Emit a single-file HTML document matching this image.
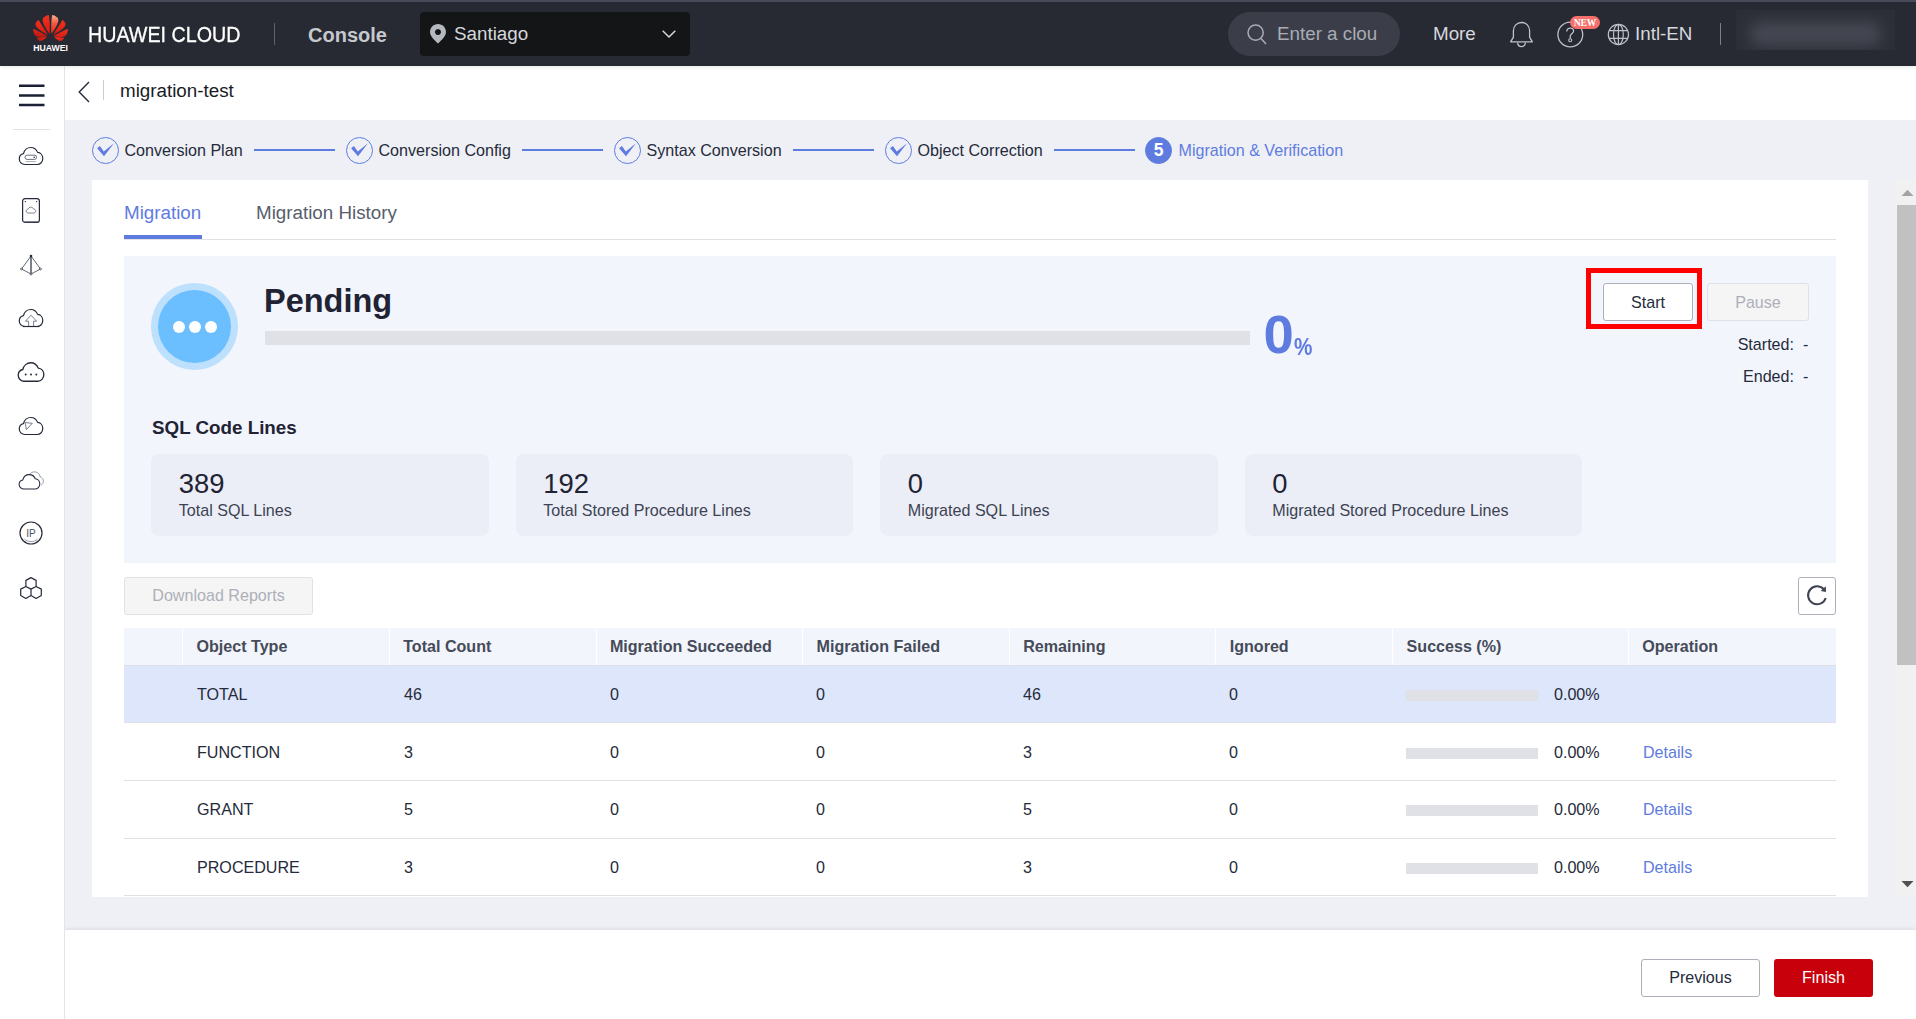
<!DOCTYPE html>
<html lang="en">
<head>
<meta charset="utf-8">
<title>migration-test</title>
<style>
*{box-sizing:border-box;margin:0;padding:0}
html,body{width:1916px;height:1019px;overflow:hidden;background:#eff0f5;font-family:"Liberation Sans",sans-serif;color:#252b3a}
div,span{white-space:nowrap}
#top{position:absolute;left:0;top:0;width:1916px;height:65.7px;background:#272a33;box-shadow:0 1px 4px rgba(0,0,0,.10);z-index:5}
#top .strip{position:absolute;left:0;top:0;width:1916px;height:2px;background:#464a59}
#top .brand{position:absolute;left:88px;top:21.5px;font-size:22.6px;line-height:26px;color:#fff;transform:scaleX(.872);transform-origin:0 50%;-webkit-text-stroke:.3px #fff}
#top .hw{position:absolute;left:30px;top:43px;width:41px;text-align:center;font-size:8.7px;line-height:10px;font-weight:bold;color:#fff}
#top .div1{position:absolute;left:274px;top:23px;width:1px;height:22px;background:#5d616e}
#top .console{position:absolute;left:308px;top:22px;font-size:20px;line-height:26px;font-weight:bold;color:#c6c8ce}
#top .region{position:absolute;left:420px;top:12px;width:270px;height:44px;border-radius:4px;background:#141517}
#top .region span{position:absolute;left:34px;top:9px;font-size:18.8px;line-height:26px;color:#d6d8dd}
#top .search{position:absolute;left:1228px;top:12px;width:172px;height:44px;border-radius:22px;background:#3b3e48}
#top .search span{position:absolute;left:49px;top:9px;font-size:18.8px;line-height:26px;color:#a9acb5}
#top .more{position:absolute;left:1433px;top:21px;font-size:18.8px;line-height:26px;color:#d6d8dd}
#top .lang{position:absolute;left:1635px;top:21px;font-size:18.8px;line-height:26px;color:#d6d8dd}
#top .div2{position:absolute;left:1720px;top:23px;width:1px;height:22px;background:#7d808a}
#top .user{position:absolute;left:1736px;top:10px;width:159px;height:40px;background:#2c2f38;overflow:hidden}
#top .user i{position:absolute;left:14px;top:12px;width:131px;height:24px;border-radius:10px;background:#454852;filter:blur(7px)}
#top .new{position:absolute;left:1570px;top:16px;width:30px;height:13px;border-radius:7px;background:#f66f6a;color:#fff;font-family:"Liberation Serif",serif;font-size:9.6px;line-height:13px;text-align:center;font-weight:bold;letter-spacing:-0.2px}
#top svg{position:absolute;overflow:visible}
#side{position:absolute;left:0;top:66px;width:65px;height:953px;background:#fff;border-right:1px solid #e3e4e9;z-index:2}
#side .sep{position:absolute;left:13px;top:63px;width:37px;height:1px;background:#dfe1e6}
#side svg{position:absolute;overflow:visible}
#title{position:absolute;left:65px;top:66px;width:1851px;height:54px;background:#fff}
#title .vbar{position:absolute;left:38px;top:14px;width:1px;height:20px;background:#c9ccd3}
#title .name{position:absolute;left:55px;top:12px;font-size:18.8px;line-height:26px;color:#191c24}
#title svg{position:absolute}
.step-t{position:absolute;top:139px;font-size:16.1px;line-height:22px;color:#252b3a}
.step-l{position:absolute;top:149px;height:2px;width:81px;background:#5e7ce0}
.step-c{position:absolute;top:136.5px;width:27px;height:27px;border:1px solid #5e7ce0;border-radius:50%}
.step-c svg{position:absolute;left:0;top:0}
.step-c.on{background:#5e7ce0;color:#fff;font-size:17.5px;line-height:25px;text-align:center;font-weight:bold}
#card{position:absolute;left:92px;top:180px;width:1776px;height:717px;background:#fff;overflow:hidden}
#card .tab{position:absolute;top:20px;font-size:18.8px;line-height:26px}
#card .tabline{position:absolute;left:32px;top:59px;width:1712px;height:1px;background:#dfe1e6}
#card .tabon{position:absolute;left:32px;top:55px;width:78px;height:4px;background:#5e7ce0}
#panel{position:absolute;left:32px;top:76px;width:1712px;height:307px;background:#f2f5fc}
#panel .c1{position:absolute;left:27px;top:27px;width:87px;height:87px;border-radius:50%;background:#bde0fd}
#panel .c2{position:absolute;left:34px;top:34px;width:73px;height:73px;border-radius:50%;background:#6cbfff}
#panel .dot{position:absolute;top:64.5px;width:12px;height:12px;border-radius:50%;background:#fff}
#panel .pending{position:absolute;left:140px;top:25px;font-size:32.5px;line-height:40px;font-weight:bold;color:#1f2333}
#panel .bar{position:absolute;left:141px;top:75px;width:985px;height:14px;background:#dfe1e6}
#panel .zero{position:absolute;left:1139.5px;top:47px;font-size:54.5px;line-height:64px;font-weight:bold;color:#5e7ce0}
#panel .pct{position:absolute;left:1169.6px;top:77px;font-size:23px;line-height:28px;font-weight:bold;color:#5e7ce0;transform:scaleX(.9);transform-origin:0 50%}
#panel .redbox{position:absolute;left:1462px;top:12px;width:116px;height:61px;border:5px solid #fe0000}
#panel .btn{position:absolute;top:27px;height:38px;border-radius:3px;font-size:16.1px;line-height:36px;text-align:center}
#panel .start{left:1479px;width:90px;border:1px solid #adb0b8;background:#fff;color:#252b3a}
#panel .pause{left:1583px;width:102px;border:1px solid #dfe1e6;background:#f5f5f6;color:#adb0b8}
#panel .lbl{position:absolute;right:42px;font-size:16.1px;line-height:22px;color:#252b3a;text-align:right}
#panel .val{position:absolute;left:1679px;font-size:16.1px;line-height:22px;color:#252b3a}
#panel .h{position:absolute;left:28px;top:159px;font-size:18.8px;line-height:26px;font-weight:bold;color:#1f2333}
.stat{position:absolute;top:198px;width:337.6px;height:82px;border-radius:8px;background:#ebeef6}
.stat b{position:absolute;left:27.5px;top:14px;font-size:27.4px;line-height:32px;font-weight:normal;color:#1f2333}
.stat i{position:absolute;left:27.5px;top:45px;font-size:16.1px;line-height:22px;font-style:normal;color:#3d4353}
#dl{position:absolute;left:32px;top:397px;width:189px;height:38px;border:1px solid #dfe1e6;border-radius:3px;background:#f5f5f6;color:#adb0b8;font-size:16.1px;line-height:34px;text-align:center}
#rf{position:absolute;left:1706px;top:397px;width:38px;height:38px;border:1px solid #adb0b8;border-radius:3px;background:#fff}
#rf svg{position:absolute;left:-1px;top:-1px}
#th{position:absolute;left:32px;top:448px;width:1712px;height:37px;background:#f2f5fc}
#th div{position:absolute;top:0;height:37px;font-size:16.1px;line-height:37px;font-weight:bold;color:#464b59;border-left:1.5px solid #fff;padding-left:13.4px}
.tr{position:absolute;left:32px;width:1712px;height:57px}
.tr.total{background:#dee6fb;height:57px}
.hr{position:absolute;left:32px;width:1712px;height:1px;background:#dfe1e6}
.tr span{position:absolute;top:18px;font-size:16.1px;line-height:22px;color:#252b3a}
.tr em{position:absolute;left:1282px;top:25px;width:132px;height:11px;background:#dfe1e6}
.tr a{position:absolute;left:1519px;top:18px;font-size:16.1px;line-height:22px;color:#5e7ce0;text-decoration:none}
#sb{position:absolute;left:1895px;top:180px;width:21px;height:717px;background:#f1f1f1}
#sb .thumb{position:absolute;left:2px;top:25px;width:19px;height:459.5px;background:#c1c1c1}
#sb svg{position:absolute;left:0}
#foot{position:absolute;left:65px;top:930px;width:1851px;height:89px;background:#fff;box-shadow:0 -1px 4px rgba(0,0,0,.09)}
#foot .prev{position:absolute;left:1576px;top:29px;width:119px;height:38px;border:1px solid #adb0b8;border-radius:3px;background:#fff;font-size:16.1px;line-height:34px;text-align:center;color:#252b3a}
#foot .fin{position:absolute;left:1709px;top:29px;width:99px;height:38px;border-radius:3px;background:#c7000b;font-size:16.1px;line-height:36px;text-align:center;color:#fff}
</style>
</head>
<body>
<div id="top">
<div class="strip"></div>
<svg style="left:32px;top:14px" width="37" height="28" viewBox="32 14 37 28">
<defs>
<linearGradient id="g1" x1="0" y1="0" x2="0" y2="1"><stop offset="0" stop-color="#f0331f"/><stop offset="1" stop-color="#d81a12"/></linearGradient>
<linearGradient id="g2" x1="0" y1="0" x2="0" y2="1"><stop offset="0" stop-color="#f9b08e"/><stop offset=".45" stop-color="#f2583c"/><stop offset="1" stop-color="#e6261a"/></linearGradient>
<linearGradient id="g3" x1="0" y1="0" x2="0" y2="1"><stop offset="0" stop-color="#e8271a"/><stop offset="1" stop-color="#b81710"/></linearGradient>
</defs>
<g id="lp">
<path d="M49.7,34 C45.5,28.5 40.5,20.5 43.6,17.6 C45.6,15.7 47.8,15 48.9,15 C49.8,20 50,28 49.7,34Z" fill="url(#g1)"/>
<path d="M47.9,34.7 C42,32 33.6,27 35.8,22.8 C36.8,21 38,20.2 38.7,19.9 C41,24 45,30 47.9,34.7Z" fill="url(#g1)"/>
<path d="M47.2,35.7 C43,37.6 38,37.6 36,36 C33.8,34.2 32.9,31 33.2,28.8 C37,30.5 43,33.5 47.2,35.7Z" fill="url(#g3)"/>
<path d="M36.8,37.7 C40,37.8 44,37.2 47.1,36.6 C45,39.2 42,41.3 40.2,41.1 C38.9,40.9 37.6,39.5 36.8,37.7Z" fill="url(#g3)"/>
</g>
<g transform="translate(101,0) scale(-1,1)">
<path d="M49.7,34 C45.5,28.5 40.5,20.5 43.6,17.6 C45.6,15.7 47.8,15 48.9,15 C49.8,20 50,28 49.7,34Z" fill="url(#g2)"/>
<path d="M47.9,34.7 C42,32 33.6,27 35.8,22.8 C36.8,21 38,20.2 38.7,19.9 C41,24 45,30 47.9,34.7Z" fill="url(#g1)"/>
<path d="M47.2,35.7 C43,37.6 38,37.6 36,36 C33.8,34.2 32.9,31 33.2,28.8 C37,30.5 43,33.5 47.2,35.7Z" fill="url(#g1)"/>
<path d="M36.8,37.7 C40,37.8 44,37.2 47.1,36.6 C45,39.2 42,41.3 40.2,41.1 C38.9,40.9 37.6,39.5 36.8,37.7Z" fill="url(#g1)"/>
</g>
</svg>
<div class="hw">HUAWEI</div>
<div class="brand">HUAWEI CLOUD</div>
<div class="div1"></div>
<div class="console">Console</div>
<div class="region"><span>Santiago</span></div>
<div class="search"><span>Enter a clou</span></div>
<div class="more">More</div>

<svg style="left:430.4px;top:24px" width="16" height="19.5" viewBox="0 0 17 20" preserveAspectRatio="none"><path d="M8.5,0 C3.8,0 0,3.7 0,8.2 C0,12.6 4.6,16.4 8.5,20 C12.4,16.4 17,12.6 17,8.2 C17,3.7 13.2,0 8.5,0Z M8.5,5 A3.2,3.2 0 1 1 8.49,5Z" fill="#b6b8bf" fill-rule="evenodd"/></svg>
<svg style="left:662px;top:30px" width="14" height="8" viewBox="0 0 14 8"><path d="M.7,.7 L7,7 L13.3,.7" fill="none" stroke="#d6d8dd" stroke-width="1.5"/></svg>
<svg style="left:1247px;top:24px" width="20" height="21" viewBox="0 0 20 21"><circle cx="8.6" cy="8.6" r="7.6" fill="none" stroke="#a9acb5" stroke-width="1.5"/><path d="M14,14.4 L19,20" stroke="#a9acb5" stroke-width="1.5" fill="none"/></svg>
<svg style="left:1510px;top:21px" width="23" height="27" viewBox="0 0 23 27"><path d="M.6,20.8 H22.4 L19.6,16.2 V9.8 C19.6,5 16.2,1.5 11.5,1.5 C6.8,1.5 3.4,5 3.4,9.8 V16.2 Z" fill="none" stroke="#bfc1c8" stroke-width="1.3" stroke-linejoin="round"/><path d="M7.6,21.6 C7.8,24 9.4,25.6 11.5,25.6 C13.6,25.6 15.2,24 15.4,21.6" fill="none" stroke="#bfc1c8" stroke-width="1.3"/></svg>
<svg style="left:1557px;top:21px" width="27" height="27" viewBox="0 0 27 27"><circle cx="13.3" cy="13.5" r="12.4" fill="none" stroke="#bfc1c8" stroke-width="1.3"/><path d="M9.8,10.6 C9.8,8.4 11.3,7.2 13.2,7.2 C15.2,7.2 16.6,8.4 16.6,10.1 C16.6,12.6 13.2,12.7 13.2,15.6 V17.4" fill="none" stroke="#bfc1c8" stroke-width="1.3"/><circle cx="13.2" cy="19.3" r="1.5" fill="none" stroke="#bfc1c8" stroke-width="1.1"/></svg>
<svg style="left:1607px;top:23px" width="23" height="23" viewBox="0 0 23 23"><g fill="none" stroke="#bfc1c8" stroke-width="1.2"><circle cx="11.4" cy="11.5" r="10.1"/><ellipse cx="11.4" cy="11.5" rx="4.9" ry="10.1"/><path d="M11.4,1.4V21.6M2,7.6H20.8M2,15.4H20.8"/></g></svg>

<div class="new">NEW</div>
<div class="lang">Intl-EN</div>
<div class="div2"></div>
<div class="user"><i></i></div>
</div>
<div id="side"><div class="sep"></div>
<svg style="left:19px;top:18px" width="26" height="24" viewBox="0 0 26 24"><path d="M0,1.8H25.5M0,11.5H25.5M0,21H25.5" stroke="#1a2035" stroke-width="2.6" fill="none"/></svg>
<svg style="left:18px;top:81px" width="26" height="18" viewBox="0 0 26 18"><path d="M6.91,17.5 C3.62,17.5 1.27,15 1.27,12 C1.27,9.3 3.06,7.2 5.5,6.7 C6.25,3.2 9.17,0.5 12.74,0.5 C15.84,0.5 18.47,2.5 19.6,5.4 C22.61,5.6 24.77,8.2 24.77,11.4 C24.77,14.8 22.23,17.5 19.13,17.5 Z" fill="none" stroke="#252b3a" stroke-width="1.2" stroke-linejoin="round" stroke-linecap="round"/><rect x="7" y="8.2" width="11.6" height="4.2" rx="2.1" fill="none" stroke="#5a6072" stroke-width=".9"/><circle cx="16.2" cy="10.3" r=".8" fill="#252b3a"/><path d="M7.6,14.6H18" stroke="#a9adb8" stroke-width="1" fill="none"/></svg>
<svg style="left:22px;top:132px" width="18" height="25" viewBox="0 0 18 25"><rect x=".6" y=".6" width="16.8" height="23.8" rx="2.5" fill="none" stroke="#252b3a" stroke-width="1.2" stroke-linejoin="round" stroke-linecap="round"/><path d="M6.2,15 C5,15 4.2,14.2 4.2,13.1 C4.2,12.1 5,11.3 6,11.2 C6.4,10 7.5,9.2 8.8,9.2 C10.1,9.2 11.2,10 11.6,11.1 C12.8,11.1 13.8,12 13.8,13.1 C13.8,14.2 12.9,15 11.8,15 Z" fill="none" stroke="#5a6072" stroke-width=".8"/><circle cx="3.4" cy="3.6" r=".7" fill="#252b3a"/><circle cx="14.6" cy="3.6" r=".7" fill="#252b3a"/><path d="M2,23.6H16" stroke="#7d8190" stroke-width="1.2"/></svg>
<svg style="left:20px;top:187.5px" width="22" height="22" viewBox="0 0 22 22"><path d="M11,2 L1.5,15 L11,20 L20.5,15 Z" fill="none" stroke="#3a4052" stroke-width=".8" stroke-linejoin="round"/><path d="M11,2 V20" stroke="#252b3a" stroke-width="1.2"/><circle cx="11" cy="2" r="1.3" fill="#252b3a"/><circle cx="1.6" cy="15" r="1" fill="#fff" stroke="#252b3a" stroke-width=".7"/><circle cx="20.4" cy="15" r="1" fill="#fff" stroke="#252b3a" stroke-width=".7"/><circle cx="11" cy="20" r="1" fill="#fff" stroke="#252b3a" stroke-width=".7"/></svg>
<svg style="left:18px;top:243px" width="26" height="18" viewBox="0 0 26 18"><path d="M6.91,17.5 C3.62,17.5 1.27,15 1.27,12 C1.27,9.3 3.06,7.2 5.5,6.7 C6.25,3.2 9.17,0.5 12.74,0.5 C15.84,0.5 18.47,2.5 19.6,5.4 C22.61,5.6 24.77,8.2 24.77,11.4 C24.77,14.8 22.23,17.5 19.13,17.5 Z" fill="none" stroke="#252b3a" stroke-width="1.2" stroke-linejoin="round" stroke-linecap="round"/><path d="M13,6.2 L7.4,12.2 H10.6 V17.5 H15.6 V12.2 H18.6 Z" fill="#fff" stroke="#5a6072" stroke-width=".8" stroke-linejoin="round"/><path d="M5,17.5H21" stroke="#252b3a" stroke-width="1.2"/></svg>
<svg style="left:18px;top:297px" width="26" height="18" viewBox="0 0 26 18"><g transform="translate(13,9) scale(1.09) translate(-13,-9)"><path d="M6.91,17.5 C3.62,17.5 1.27,15 1.27,12 C1.27,9.3 3.06,7.2 5.5,6.7 C6.25,3.2 9.17,0.5 12.74,0.5 C15.84,0.5 18.47,2.5 19.6,5.4 C22.61,5.6 24.77,8.2 24.77,11.4 C24.77,14.8 22.23,17.5 19.13,17.5 Z" fill="none" stroke="#252b3a" stroke-width="1.2" stroke-linejoin="round" stroke-linecap="round" stroke-width="1.1"/><circle cx="8.1" cy="11.3" r=".9" fill="#252b3a"/><circle cx="13" cy="11.3" r=".9" fill="#252b3a"/><circle cx="17.9" cy="11.3" r=".9" fill="#252b3a"/></g></svg>
<svg style="left:18px;top:351px" width="26" height="18" viewBox="0 0 26 18"><path d="M6.91,17.5 C3.62,17.5 1.27,15 1.27,12 C1.27,9.3 3.06,7.2 5.5,6.7 C6.25,3.2 9.17,0.5 12.74,0.5 C15.84,0.5 18.47,2.5 19.6,5.4 C22.61,5.6 24.77,8.2 24.77,11.4 C24.77,14.8 22.23,17.5 19.13,17.5 Z" fill="none" stroke="#252b3a" stroke-width="1.2" stroke-linejoin="round" stroke-linecap="round"/><path d="M7.1,5.5 L14.3,6.3 L8.4,12.6 Z" fill="#fff" stroke="#5a6072" stroke-width=".8" stroke-linejoin="round"/></svg>
<svg style="left:18px;top:405px" width="27" height="20" viewBox="0 0 27 20"><path d="M11.2,3.6 C12.7,1.7 15,.6 17.2,.9 C20.2,1.3 21.8,3.5 22,5.7 C24.2,6.3 25.5,8.3 25.4,10.5 C25.3,12.1 24.5,13.3 23.2,14" fill="none" stroke="#8c91a0" stroke-width=".9"/><g transform="translate(0,3.2) scale(.88,.85)"><path d="M6.91,17.5 C3.62,17.5 1.27,15 1.27,12 C1.27,9.3 3.06,7.2 5.5,6.7 C6.25,3.2 9.17,0.5 12.74,0.5 C15.84,0.5 18.47,2.5 19.6,5.4 C22.61,5.6 24.77,8.2 24.77,11.4 C24.77,14.8 22.23,17.5 19.13,17.5 Z" fill="none" stroke="#252b3a" stroke-width="1.2" stroke-linejoin="round" stroke-linecap="round" stroke-width="1.5"/></g></svg>
<svg style="left:19px;top:455.3px" width="24" height="24" viewBox="0 0 24 24"><circle cx="12" cy="12" r="11" fill="none" stroke="#252b3a" stroke-width="1.2" stroke-linejoin="round" stroke-linecap="round" stroke-width=".9"/><path d="M5.5,18 C9,21.5 15,21.5 18.5,18" fill="none" stroke="#8c91a0" stroke-width=".9"/><text x="12" y="15.6" text-anchor="middle" font-family="Liberation Sans,sans-serif" font-size="10" fill="#4a5062">IP</text></svg>
<svg style="left:20px;top:511px" width="22" height="22" viewBox="0 0 22 22"><path d="M11,.65 L16.1,3.4 V9.5 L21.3,12.1 V18.5 L16.1,21.4 L11,18.5 L5.9,21.4 L.7,18.5 V12.1 L5.9,9.5 V3.4 Z M5.9,9.5 L11,12.1 L16.1,9.5 M11,12.1 V18.5" fill="none" stroke="#252b3a" stroke-width="1.2" stroke-linejoin="round" stroke-linecap="round" stroke-width="1"/></svg>
</div>
<div id="title">
<svg style="left:13px;top:14.5px" width="12" height="22" viewBox="0 0 12 22"><path d="M11,1 L1.2,11 L11,21" fill="none" stroke="#252b3a" stroke-width="1.4"/></svg>
<div class="vbar"></div><div class="name">migration-test</div></div>
<div class="step-c" style="left:92px"><svg width="25" height="25" viewBox="0 0 25 25"><path d="M4.1,10.2 L6.9,8 L10.8,13.6 L21,5.3 L11,18.3 Z" fill="#5e7ce0"/></svg></div><div class="step-t" style="left:124.5px">Conversion Plan</div><div class="step-l" style="left:254px"></div>
<div class="step-c" style="left:346px"><svg width="25" height="25" viewBox="0 0 25 25"><path d="M4.1,10.2 L6.9,8 L10.8,13.6 L21,5.3 L11,18.3 Z" fill="#5e7ce0"/></svg></div><div class="step-t" style="left:378.5px">Conversion Config</div><div class="step-l" style="left:522px"></div>
<div class="step-c" style="left:614px"><svg width="25" height="25" viewBox="0 0 25 25"><path d="M4.1,10.2 L6.9,8 L10.8,13.6 L21,5.3 L11,18.3 Z" fill="#5e7ce0"/></svg></div><div class="step-t" style="left:646.5px">Syntax Conversion</div><div class="step-l" style="left:793px"></div>
<div class="step-c" style="left:885px"><svg width="25" height="25" viewBox="0 0 25 25"><path d="M4.1,10.2 L6.9,8 L10.8,13.6 L21,5.3 L11,18.3 Z" fill="#5e7ce0"/></svg></div><div class="step-t" style="left:917.5px">Object Correction</div><div class="step-l" style="left:1054px"></div>
<div class="step-c on" style="left:1145px">5</div><div class="step-t" style="left:1178.5px;color:#5e7ce0">Migration &amp; Verification</div>

<div id="card">
<div class="tab" style="left:32px;color:#5e7ce0">Migration</div>
<div class="tab" style="left:164px;color:#575d6c">Migration History</div>
<div class="tabline"></div><div class="tabon"></div>
<div id="panel">
<div class="c1"></div><div class="c2"></div>
<div class="dot" style="left:48.5px"></div><div class="dot" style="left:64.5px"></div><div class="dot" style="left:80.5px"></div>
<div class="pending">Pending</div>
<div class="bar"></div>
<div class="zero">0</div><div class="pct">%</div>
<div class="redbox"></div>
<div class="btn start">Start</div><div class="btn pause">Pause</div>
<div class="lbl" style="top:77px">Started:</div><div class="val" style="top:77px">-</div>
<div class="lbl" style="top:109px">Ended:</div><div class="val" style="top:109px">-</div>
<div class="h">SQL Code Lines</div>
<div class="stat" style="left:27.3px"><b>389</b><i>Total SQL Lines</i></div><div class="stat" style="left:391.8px"><b>192</b><i>Total Stored Procedure Lines</i></div><div class="stat" style="left:756.3px"><b>0</b><i>Migrated SQL Lines</i></div><div class="stat" style="left:1120.8px"><b>0</b><i>Migrated Stored Procedure Lines</i></div>
</div>
<div id="dl">Download Reports</div>
<div id="rf"><svg width="38" height="38" viewBox="0 0 38 38"><path d="M27.7,20.93 A9,9 0 1 1 26.47,13.14" fill="none" stroke="#3d4353" stroke-width="2"/><path d="M27.8,9.2 L28,14.9 L22.7,14.1 Z" fill="#3d4353"/></svg></div>
<div id="th"><div style="left:58.1px">Object Type</div><div style="left:264.8px">Total Count</div><div style="left:471.5px">Migration Succeeded</div><div style="left:678.2px">Migration Failed</div><div style="left:884.8px">Remaining</div><div style="left:1091.3px">Ignored</div><div style="left:1268.2px">Success (%)</div><div style="left:1503.8px">Operation</div></div>
<div class="tr total" style="top:485px"><span style="left:73px">TOTAL</span><span style="left:280px">46</span><span style="left:486px">0</span><span style="left:692px">0</span><span style="left:899px">46</span><span style="left:1105px">0</span><em></em><span style="left:1430px">0.00%</span></div>
<div class="tr" style="top:543px"><span style="left:73px">FUNCTION</span><span style="left:280px">3</span><span style="left:486px">0</span><span style="left:692px">0</span><span style="left:899px">3</span><span style="left:1105px">0</span><em></em><span style="left:1430px">0.00%</span><a>Details</a></div>
<div class="tr" style="top:600px"><span style="left:73px">GRANT</span><span style="left:280px">5</span><span style="left:486px">0</span><span style="left:692px">0</span><span style="left:899px">5</span><span style="left:1105px">0</span><em></em><span style="left:1430px">0.00%</span><a>Details</a></div>
<div class="tr" style="top:658px"><span style="left:73px">PROCEDURE</span><span style="left:280px">3</span><span style="left:486px">0</span><span style="left:692px">0</span><span style="left:899px">3</span><span style="left:1105px">0</span><em></em><span style="left:1430px">0.00%</span><a>Details</a></div>
<div class="hr" style="top:485px"></div><div class="hr" style="top:542px"></div><div class="hr" style="top:600px"></div><div class="hr" style="top:658px"></div><div class="hr" style="top:715px"></div>
</div>
<div id="sb"><svg style="top:9px" width="21" height="8" viewBox="0 0 21 8"><path d="M6.5,7 L12.5,.8 L18.5,7Z" fill="#a3a3a3"/></svg><div class="thumb"></div><svg style="top:700px" width="21" height="8" viewBox="0 0 21 8"><path d="M6.5,1 L12.5,7.2 L18.5,1Z" fill="#505050"/></svg></div>
<div id="foot"><div class="prev">Previous</div><div class="fin">Finish</div></div>
</body>
</html>
